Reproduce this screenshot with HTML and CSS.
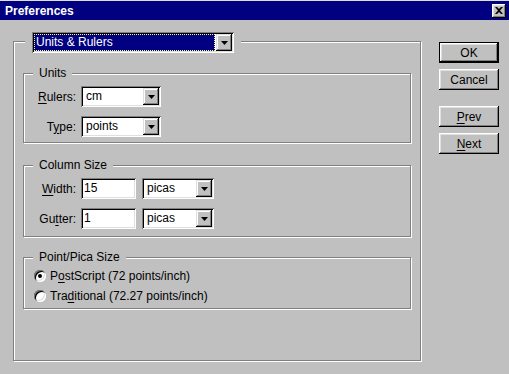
FILE: index.html
```html
<!DOCTYPE html>
<html lang="en">
  <head>
    <meta charset="UTF-8" />
    <meta name="viewport" content="width=device-width, initial-scale=1.0" />
    <title>Preferences</title>
    <link rel="stylesheet" href="styles.css">
  </head>
  <body>
    <div class="title-bar">
      <span class="title">Preferences</span>
      <button class="close-btn" type="button" aria-label="Close">
        <svg width="8" height="7" viewBox="0 0 8 7"><path d="M0 0h2l2 2 2-2h2L5 3.5 8 7H6L4 5 2 7H0l3-3.5z" fill="#000"/></svg>
      </button>
    </div>
    <div class="dialog">
      <div class="panel">
        <!-- Page selector sits on the panel border -->
        <div class="panel-legend">
          <div class="combo combo-main">
            <span class="combo-value selected">Units &amp; Rulers</span>
            <span class="combo-btn"><svg width="7" height="4" viewBox="0 0 7 4"><path d="M0 0h7L3.5 4z" fill="#000"/></svg></span>
          </div>
        </div>

        <div class="group group-units">
          <span class="group-title">Units</span>
          <div class="row">
            <label class="row-label"><u>R</u>ulers:</label>
            <div class="combo combo-unit">
              <span class="combo-value">cm</span>
              <span class="combo-btn"><svg width="7" height="4" viewBox="0 0 7 4"><path d="M0 0h7L3.5 4z" fill="#000"/></svg></span>
            </div>
          </div>
          <div class="row">
            <label class="row-label">T<u>y</u>pe:</label>
            <div class="combo combo-unit">
              <span class="combo-value">points</span>
              <span class="combo-btn"><svg width="7" height="4" viewBox="0 0 7 4"><path d="M0 0h7L3.5 4z" fill="#000"/></svg></span>
            </div>
          </div>
        </div>

        <div class="group group-column">
          <span class="group-title">Column Size</span>
          <div class="row">
            <label class="row-label"><u>W</u>idth:</label>
            <div class="field">15</div>
            <div class="combo combo-picas">
              <span class="combo-value">picas</span>
              <span class="combo-btn"><svg width="7" height="4" viewBox="0 0 7 4"><path d="M0 0h7L3.5 4z" fill="#000"/></svg></span>
            </div>
          </div>
          <div class="row">
            <label class="row-label">Gu<u>t</u>ter:</label>
            <div class="field">1</div>
            <div class="combo combo-picas">
              <span class="combo-value">picas</span>
              <span class="combo-btn"><svg width="7" height="4" viewBox="0 0 7 4"><path d="M0 0h7L3.5 4z" fill="#000"/></svg></span>
            </div>
          </div>
        </div>

        <div class="group group-point">
          <span class="group-title">Point/Pica Size</span>
          <div class="radio-row">
            <span class="radio checked"></span>
            <span>P<u>o</u>stScript (72 points/inch)</span>
          </div>
          <div class="radio-row">
            <span class="radio"></span>
            <span>Tra<u>d</u>itional (72.27 points/inch)</span>
          </div>
        </div>
      </div>

      <div class="buttons">
        <button class="btn btn-default" type="button">OK</button>
        <button class="btn btn-cancel" type="button">Cancel</button>
        <button class="btn btn-prev" type="button"><u>P</u>rev</button>
        <button class="btn" type="button"><u>N</u>ext</button>
      </div>
    </div>
  </body>
</html>
```

FILE: styles.css
```css
body {
  margin: 0;
  width: 509px;
  height: 374px;
  overflow: hidden;
  background: #c0c0c0;
  font-family: "Liberation Sans", Arial, sans-serif;
  font-size: 12px;
  color: #000;
}
u {
  text-decoration-thickness: 1px;
  text-underline-offset: 2px;
}
/* Title bar */
.title-bar {
  height: 19px;
  border-top: 1px solid #dfdfdf;
  background: #000080;
  display: flex;
  align-items: center;
  justify-content: space-between;
  padding: 0 3px 0 5px;
}
.title {
  color: #fff;
  font-weight: bold;
}
.close-btn {
  width: 14px;
  height: 14px;
  padding: 0;
  border: none;
  background: #c0c0c0;
  display: flex;
  align-items: center;
  justify-content: center;
  box-shadow: inset -1px -1px #000, inset 1px 1px #fff, inset -2px -2px #808080, inset 2px 2px #dfdfdf;
}
/* Dialog body */
.dialog {
  display: flex;
  align-items: flex-start;
  padding: 21px 0 0 13px;
}
.panel {
  position: relative;
  box-sizing: border-box;
  width: 408px;
  height: 320px;
  padding-top: 31px;
  border: 1px solid #808080;
  box-shadow: inset 1px 1px #fff, 1px 1px #fff;
}
.panel-legend {
  position: absolute;
  top: -10px;
  left: 11px;
  padding: 0 7px;
  background: #c0c0c0;
}
.group {
  position: relative;
  box-sizing: border-box;
  margin: 0 9px;
  border: 1px solid #808080;
  box-shadow: inset 1px 1px #fff, 1px 1px #fff;
}
.group-title {
  position: absolute;
  top: -8px;
  left: 9px;
  padding: 0 6px;
  background: #c0c0c0;
  line-height: 14px;
}
.group-units {
  height: 70px;
  padding: 12px 0 5px;
}
.group-column {
  height: 72px;
  margin-top: 22px;
  padding: 12px 0 7px;
}
.group-point {
  height: 52px;
  margin-top: 20px;
  padding-top: 8px;
}
.row {
  display: flex;
  align-items: center;
  height: 21px;
}
.row + .row {
  margin-top: 9px;
}
.row-label {
  width: 52px;
  margin-right: 5px;
  text-align: right;
}
/* Sunken fields */
.combo,
.field {
  box-sizing: border-box;
  height: 21px;
  padding: 2px;
  background: #fff;
  box-shadow: inset 1px 1px #808080, inset -1px -1px #fff, inset 2px 2px #000, inset -2px -2px #dfdfdf;
}
.combo {
  display: flex;
}
.combo-value {
  flex: 1;
  padding-left: 3px;
  line-height: 17px;
  white-space: nowrap;
}
.combo-value.selected {
  margin-right: 1px;
  padding-left: 2px;
  background: #000080;
  color: #fff;
  outline: 1px dotted #fff68c;
  outline-offset: -1px;
}
.combo-btn {
  width: 16px;
  background: #c0c0c0;
  display: flex;
  align-items: center;
  justify-content: center;
  box-shadow: inset -1px -1px #000, inset 1px 1px #dfdfdf, inset -2px -2px #808080, inset 2px 2px #fff;
}
.combo-main {
  width: 202px;
}
.combo-unit {
  width: 80px;
}
.field {
  width: 55px;
  padding-left: 3px;
  line-height: 17px;
}
.combo-picas {
  width: 72px;
  margin-left: 6px;
}
/* Radios */
.radio-row {
  display: flex;
  align-items: center;
  height: 20px;
  padding-left: 10px;
}
.radio {
  position: relative;
  width: 12px;
  height: 12px;
  margin-right: 4px;
  border-radius: 50%;
  background: #fff;
  box-shadow: inset 1px 1px #808080, inset -1px -1px #fff, inset 2px 2px #000, inset -2px -2px #dfdfdf;
}
.radio.checked::after {
  content: "";
  position: absolute;
  left: 4px;
  top: 4px;
  width: 4px;
  height: 4px;
  border-radius: 50%;
  background: #000;
}
/* Buttons */
.buttons {
  display: flex;
  flex-direction: column;
  margin: 1px 0 0 18px;
}
.btn {
  box-sizing: border-box;
  width: 60px;
  height: 21px;
  margin-bottom: 6px;
  padding: 0;
  border: none;
  background: #c0c0c0;
  font-family: "Liberation Sans", Arial, sans-serif;
  font-size: 12px;
  color: #000;
  box-shadow: inset -1px -1px #000, inset 1px 1px #fff, inset -2px -2px #808080, inset 2px 2px #dfdfdf;
}
.btn-default {
  border: 1px solid #000;
}
.btn-cancel {
  margin-bottom: 16px;
}
```
